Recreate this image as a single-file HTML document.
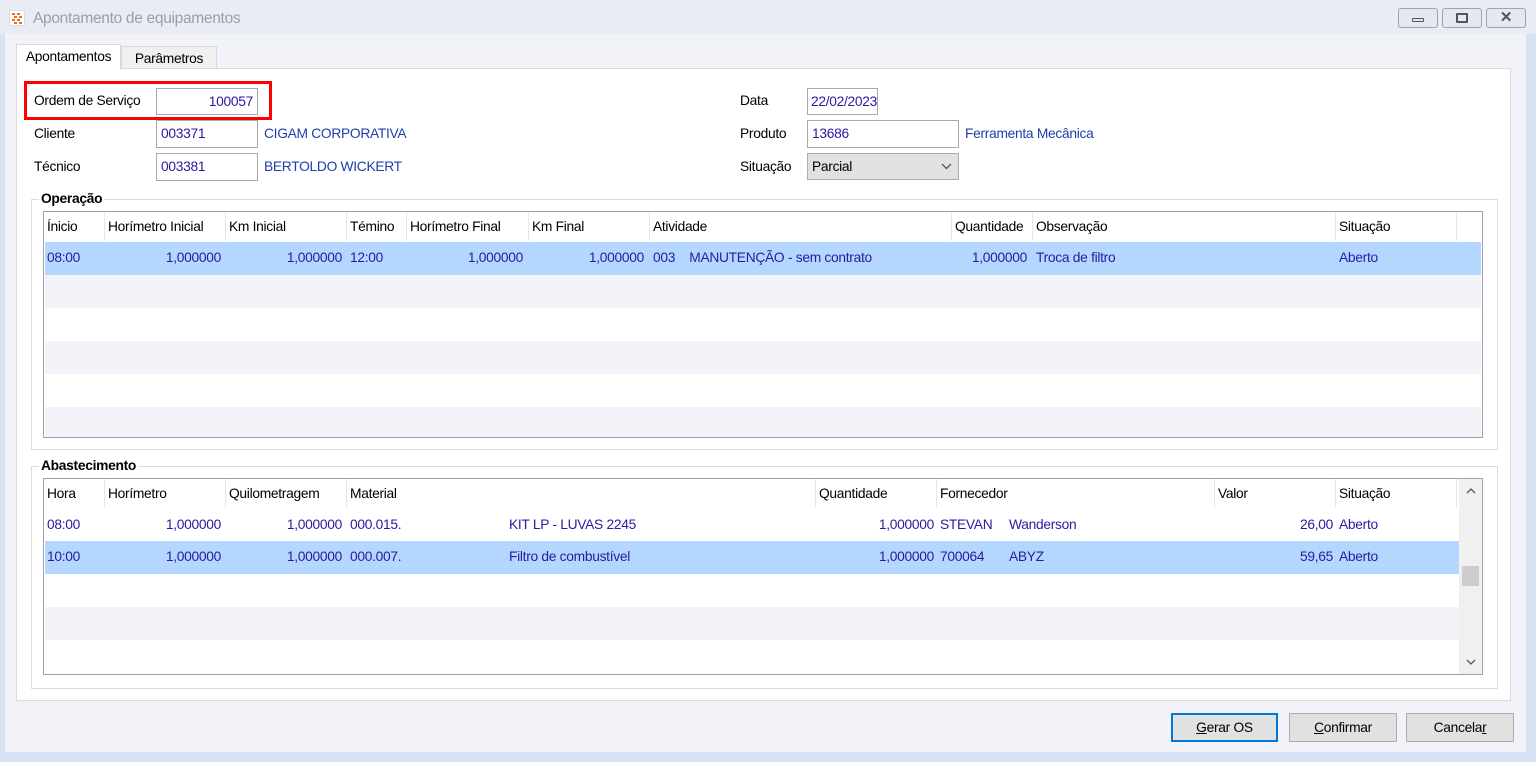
<!DOCTYPE html>
<html><head><meta charset="utf-8"><style>
*{margin:0;padding:0;box-sizing:border-box}
body{width:1536px;height:762px;background:#d6e3f2;font-family:"Liberation Sans",sans-serif;font-size:13.8px;color:#000;position:relative;overflow:hidden;letter-spacing:-0.3px}
.a{position:absolute;white-space:nowrap}
.in{position:absolute;background:#fff;border:1px solid #a8a8a8;color:#2a1aa0;padding:0 4px;line-height:25px}
.lnk{color:#1f3ea8}
.hd{position:absolute;top:0;height:29px;line-height:29px;border-right:1px solid #e6e6e6}
.row{position:absolute;left:1px;height:33px;line-height:31px;color:#2a1aa0}
.row span{position:absolute}
.r{text-align:right}
.btn{position:absolute;height:29px;background:#e1e1e1;border:1px solid #adadad;text-align:center;line-height:27px}
</style></head><body>
<div class="a" style="left:0;top:0;width:1536px;height:34px;background:#e8edf4"></div>
<div class="a" style="left:9px;top:10px;width:16px;height:16px;background:#fff;border:1px solid #ddd"><svg width="14" height="14" viewBox="0 0 14 14"><g fill="#f26a1b"><rect x="2" y="2" width="3" height="2"/><rect x="7" y="2" width="3" height="2"/><rect x="4" y="5" width="3" height="2"/><rect x="9" y="5" width="3" height="2"/><rect x="2" y="8" width="3" height="2"/><rect x="7" y="8" width="3" height="2"/><rect x="4" y="11" width="3" height="2"/><rect x="9" y="11" width="3" height="2"/></g></svg></div>
<div class="a" style="left:33px;top:10px;font-size:15.5px;color:#9a9ea6">Apontamento de equipamentos</div>
<div class="a" style="left:1398px;top:8px;width:40px;height:20px;border:1px solid #9aa4b4;border-radius:3px;background:#e4e9f1"><div class="a" style="left:13px;top:9px;width:12px;height:4px;border:1px solid #555;border-radius:1px"></div></div>
<div class="a" style="left:1442px;top:8px;width:40px;height:20px;border:1px solid #9aa4b4;border-radius:3px;background:#e4e9f1"><div class="a" style="left:13px;top:4px;width:12px;height:10px;border:2px solid #555;border-radius:1px"></div></div>
<div class="a" style="left:1486px;top:8px;width:40px;height:20px;border:1px solid #9aa4b4;border-radius:3px;background:#e4e9f1;text-align:center;line-height:18px;font-weight:bold;color:#555;font-size:15px">✕</div>
<div class="a" style="left:5px;top:34px;width:1521px;height:718px;background:#f2f3f8"></div>
<div class="a" style="left:121px;top:46px;width:96px;height:23px;background:#f0f0f0;border:1px solid #d9d9d9;text-align:center;line-height:24px">Parâmetros</div>
<div class="a" style="left:16px;top:68px;width:1495px;height:633px;background:#fff;border:1px solid #dadada"></div>
<div class="a" style="left:16px;top:44px;width:105px;height:26px;background:#fff;border:1px solid #dadada;border-bottom:none;text-align:center;line-height:24px">Apontamentos</div>
<div class="a" style="left:24px;top:81px;width:248px;height:39px;border:3px solid #f00"></div>
<div class="a" style="left:34px;top:93px">Ordem de Serviço</div>
<div class="in" style="left:156px;top:88px;width:102px;height:27px;text-align:right">100057</div>
<div class="a" style="left:34px;top:126px">Cliente</div>
<div class="in" style="left:156px;top:120px;width:102px;height:28px">003371</div>
<div class="a lnk" style="left:264px;top:126px">CIGAM CORPORATIVA</div>
<div class="a" style="left:34px;top:159px">Técnico</div>
<div class="in" style="left:156px;top:153px;width:102px;height:28px">003381</div>
<div class="a lnk" style="left:264px;top:159px">BERTOLDO WICKERT</div>
<div class="a" style="left:740px;top:93px">Data</div>
<div class="in" style="left:807px;top:88px;width:71px;height:27px;overflow:hidden;padding:0 0 0 3px;white-space:nowrap">22/02/2023</div>
<div class="a" style="left:740px;top:126px">Produto</div>
<div class="in" style="left:807px;top:120px;width:152px;height:28px">13686</div>
<div class="a lnk" style="left:965px;top:126px">Ferramenta Mecânica</div>
<div class="a" style="left:740px;top:159px">Situação</div>
<div class="a" style="left:807px;top:153px;width:152px;height:27px;background:#e1e1e1;border:1px solid #adadad;padding-left:4px;line-height:25px">Parcial<svg class="a" style="left:133px;top:9px" width="11" height="7" viewBox="0 0 11 7"><path d="M1 1 L5.5 5.5 L10 1" fill="none" stroke="#444" stroke-width="1.2"/></svg></div>
<div class="a" style="left:31px;top:199px;width:1467px;height:251px;border:1px solid #dcdcdc"></div>
<div class="a" style="left:39px;top:191px;background:#fff;padding:0 2px;font-weight:bold">Operação</div>
<div class="a" style="left:43px;top:211px;width:1440px;height:227px;border:1px solid #a0a0a8;background:#fff;overflow:hidden">
 <div class="hd" style="left:3px;width:58px">Ínicio</div>
 <div class="hd" style="left:64px;width:118px">Horímetro Inicial</div>
 <div class="hd" style="left:185px;width:118px">Km Inicial</div>
 <div class="hd" style="left:306px;width:57px">Témino</div>
 <div class="hd" style="left:366px;width:119px">Horímetro Final</div>
 <div class="hd" style="left:488px;width:118px">Km Final</div>
 <div class="hd" style="left:609px;width:299px">Atividade</div>
 <div class="hd" style="left:911px;width:78px">Quantidade</div>
 <div class="hd" style="left:992px;width:300px">Observação</div>
 <div class="hd" style="left:1295px;width:118px">Situação</div>
 <div class="row" style="top:30px;width:1436px;background:#b3d7ff">
  <span style="left:2px">08:00</span><span class="r" style="right:1260px">1,000000</span><span class="r" style="right:1139px">1,000000</span><span style="left:305px">12:00</span><span class="r" style="right:958px">1,000000</span><span class="r" style="right:837px">1,000000</span><span style="left:608px">003&nbsp;&nbsp;&nbsp;&nbsp;MANUTENÇÃO - sem contrato</span><span class="r" style="right:454px">1,000000</span><span style="left:991px">Troca de filtro</span><span style="left:1294px">Aberto</span></div>
 <div class="row" style="top:63px;width:1436px;background:#f2f3f8"></div>
 <div class="row" style="top:129px;width:1436px;background:#f2f3f8"></div>
 <div class="row" style="top:195px;width:1436px;background:#f2f3f8"></div>
</div>
<div class="a" style="left:31px;top:466px;width:1467px;height:223px;border:1px solid #dcdcdc"></div>
<div class="a" style="left:39px;top:458px;background:#fff;padding:0 2px;font-weight:bold">Abastecimento</div>
<div class="a" style="left:43px;top:478px;width:1440px;height:197px;border:1px solid #a0a0a8;background:#fff;overflow:hidden">
 <div class="hd" style="left:3px;width:58px">Hora</div>
 <div class="hd" style="left:64px;width:118px">Horímetro</div>
 <div class="hd" style="left:185px;width:118px">Quilometragem</div>
 <div class="hd" style="left:306px;width:466px">Material</div>
 <div class="hd" style="left:775px;width:118px">Quantidade</div>
 <div class="hd" style="left:896px;width:275px">Fornecedor</div>
 <div class="hd" style="left:1174px;width:118px">Valor</div>
 <div class="hd" style="left:1295px;width:118px">Situação</div>
 <div class="row" style="top:30px;width:1414px">
  <span style="left:2px">08:00</span><span class="r" style="right:1238px">1,000000</span><span class="r" style="right:1117px">1,000000</span><span style="left:305px">000.015.</span><span style="left:464px">KIT LP - LUVAS 2245</span><span class="r" style="right:525px">1,000000</span><span style="left:895px">STEVAN</span><span style="left:964px">Wanderson</span><span class="r" style="right:126px">26,00</span><span style="left:1294px">Aberto</span></div>
 <div class="row" style="top:62px;width:1414px;background:#b3d7ff">
  <span style="left:2px">10:00</span><span class="r" style="right:1238px">1,000000</span><span class="r" style="right:1117px">1,000000</span><span style="left:305px">000.007.</span><span style="left:464px">Filtro de combustível</span><span class="r" style="right:525px">1,000000</span><span style="left:895px">700064</span><span style="left:964px">ABYZ</span><span class="r" style="right:126px">59,65</span><span style="left:1294px">Aberto</span></div>
 <div class="row" style="top:128px;width:1414px;background:#f2f3f8"></div>
 <div class="a" style="left:1415px;top:0;width:23px;height:195px;background:#f0f0f0">
  <svg class="a" style="left:7px;top:9px" width="10" height="6" viewBox="0 0 10 6"><path d="M1 5 L5 1 L9 5" fill="none" stroke="#555" stroke-width="1.3"/></svg>
  <div class="a" style="left:3px;top:87px;width:17px;height:20px;background:#cdcdcd"></div>
  <svg class="a" style="left:7px;top:180px" width="10" height="6" viewBox="0 0 10 6"><path d="M1 1 L5 5 L9 1" fill="none" stroke="#555" stroke-width="1.3"/></svg>
 </div>
</div>
<div class="btn" style="left:1171px;top:713px;width:107px;border:2px solid #0078d7;line-height:25px"><u>G</u>erar OS</div>
<div class="btn" style="left:1289px;top:713px;width:108px"><u>C</u>onfirmar</div>
<div class="btn" style="left:1406px;top:713px;width:108px">Cancela<u>r</u></div>
</body></html>
